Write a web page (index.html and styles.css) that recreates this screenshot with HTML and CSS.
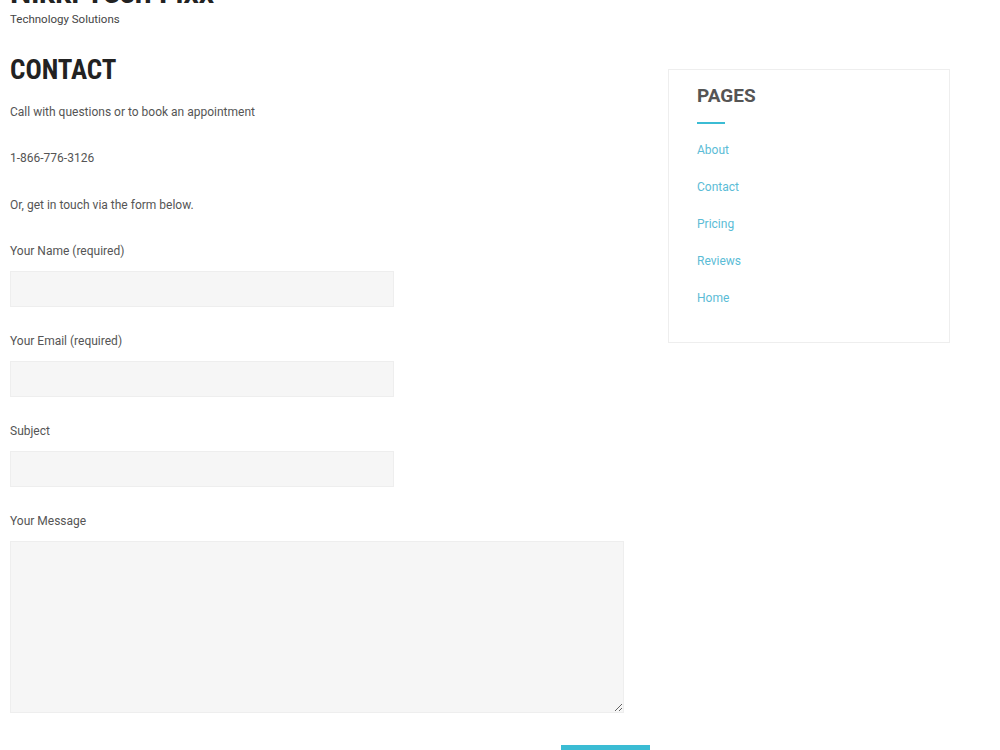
FILE: index.html
```html
<!DOCTYPE html>
<html lang="en">
<head>
    <meta charset="UTF-8">
    <title>Contact - Nikki Tech Fixx</title>
    <link rel="stylesheet" href="styles.css">
</head>
<body>
<header class="site-header">
    <div class="site-title">Nikki Tech Fixx</div>
    <div class="site-tagline">Technology Solutions</div>
</header>

<div class="wrap">
    <main class="content">
        <h1 class="page-title">CONTACT</h1>
        <p>Call with questions or to book an appointment</p>
        <p>1-866-776-3126</p>
        <p>Or, get in touch via the form below.</p>

        <form class="contact-form">
            <div class="field">
                <label for="name">Your Name (required)</label>
                <input type="text" id="name">
            </div>
            <div class="field">
                <label for="email">Your Email (required)</label>
                <input type="email" id="email">
            </div>
            <div class="field">
                <label for="subject">Subject</label>
                <input type="text" id="subject">
            </div>
            <div class="field">
                <label for="message">Your Message</label>
                <textarea id="message"></textarea>
            </div>
            <div class="actions">
                <button type="submit">Send</button>
            </div>
        </form>
    </main>

    <aside class="sidebar">
        <div class="widget">
            <h2 class="widget-title">PAGES</h2>
            <ul class="page-list">
                <li><a href="#">About</a></li>
                <li><a href="#">Contact</a></li>
                <li><a href="#">Pricing</a></li>
                <li><a href="#">Reviews</a></li>
                <li><a href="#">Home</a></li>
            </ul>
        </div>
    </aside>
</div>
</body>
</html>
```

FILE: styles.css
```css
body {
    margin: 0;
    padding: 0 10px;
    font-family: 'Roboto', 'Liberation Sans', sans-serif;
    font-size: 12px;
    color: #555;
    background-color: #fff;
    overflow: hidden;
}

.site-header {
    margin-top: -25px;
}

.site-title {
    font-size: 30px;
    font-weight: 700;
    line-height: 36px;
    color: #222;
}

.site-tagline {
    font-size: 11.5px;
    line-height: 16px;
    color: #444;
}

.wrap {
    display: flex;
    gap: 44px;
    width: 940px;
}

.content {
    width: 614px;
}

.page-title {
    font-family: 'Roboto Condensed', 'Liberation Sans Narrow', 'Roboto', sans-serif;
    font-stretch: condensed;
    font-size: 27px;
    font-weight: 700;
    color: #222;
    margin: 27px 0 14.5px;
    line-height: 32px;
}

p {
    margin: 0 0 23.5px;
    line-height: 23px;
}

.field {
    margin-bottom: 23px;
}

.field label {
    display: block;
    line-height: 23px;
    margin-bottom: 8px;
}

.field input,
.field textarea {
    display: block;
    box-sizing: border-box;
    background-color: #f6f6f6;
    border: 1px solid #eee;
    border-radius: 0;
    font-family: inherit;
    font-size: 12px;
}

.field input {
    width: 384px;
    height: 36px;
}

.field textarea {
    width: 614px;
    height: 172px;
}

.actions {
    margin-top: 32px;
}

.actions button {
    margin-left: 551px;
    width: 89px;
    height: 40px;
    background-color: #3bbcd4;
    color: #fff;
    border: none;
    font-family: inherit;
    font-size: 12px;
    text-transform: uppercase;
}

.sidebar {
    width: 282px;
    padding-top: 42px;
}

.widget {
    border: 1px solid #eee;
    padding: 14px 28px 18px;
}

.widget-title {
    font-size: 19px;
    font-weight: 700;
    color: #555;
    margin: 0;
    line-height: 24px;
    padding-bottom: 16px;
    position: relative;
}

.widget-title::after {
    content: '';
    position: absolute;
    left: 0;
    bottom: 0;
    width: 28px;
    height: 2px;
    background-color: #3bbcd4;
}

.page-list {
    list-style: none;
    margin: 14.5px 0 0;
    padding: 0;
}

.page-list li {
    line-height: 23px;
    margin-bottom: 14px;
}

.page-list a {
    color: #5bbcd6;
    text-decoration: none;
}
```
